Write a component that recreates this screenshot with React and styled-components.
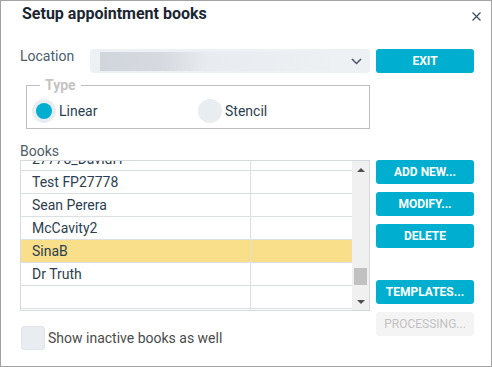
import React, { useLayoutEffect, useRef } from 'react';
import styled, { createGlobalStyle } from 'styled-components';

const GlobalStyle = createGlobalStyle`
  html, body {
    margin: 0;
    padding: 0;
    background: #fff;
  }
  body {
    font-family: Roboto, "Liberation Sans", sans-serif;
  }
  * {
    box-sizing: border-box;
  }
`;

const Dialog = styled.div`
  width: 492px;
  height: 367px;
  border: 1px solid #a3a3a3;
  background: #fff;
  display: flex;
  flex-direction: column;
`;

const Header = styled.div`
  height: 48px;
  display: flex;
  justify-content: space-between;
  align-items: flex-start;
  padding: 3px 10px 0 21px;
`;

const Title = styled.h1`
  margin: 0;
  font-size: 16px;
  line-height: 19px;
  font-weight: 700;
  color: #1b2633;
`;

const CloseButton = styled.button`
  margin-top: 8px;
  padding: 0;
  border: 0;
  background: none;
  width: 9px;
  height: 9px;
  display: flex;
  cursor: pointer;
`;

const Body = styled.div`
  padding: 0 17px 0 19px;
  display: grid;
  grid-template-columns: 350px 98px;
  column-gap: 6px;
  grid-template-areas:
    "loc exit"
    "type ."
    "books ."
    "table btns"
    "check btns";
  align-items: start;
`;

const LocationRow = styled.div`
  grid-area: loc;
  display: flex;
  align-items: flex-start;
`;

const FieldLabel = styled.label`
  font-size: 14px;
  line-height: 16px;
  color: #4d5c6b;
  width: ${p => p.$width || 'auto'};
  margin-top: ${p => p.$top || 0}px;
  display: block;
`;

const Select = styled.div`
  flex: 1;
  height: 24px;
  border-radius: 4px;
  background: #eef1f4;
  display: flex;
  align-items: center;
  justify-content: space-between;
  padding: 0 8px 0 10px;
`;

const Placeholder = styled.span`
  width: 240px;
  height: 19px;
  background: linear-gradient(to right, #d1d5dc 0%, #d6dae0 25%, #e8ebef 45%, #eef1f4 100%);
`;

const ActionButton = styled.button`
  height: 24px;
  width: 98px;
  border: 0;
  border-radius: 3px;
  padding: 0;
  font-family: inherit;
  font-size: 12px;
  font-weight: ${p => (p.disabled ? 400 : 700)};
  color: ${p => (p.disabled ? '#c2c2c2' : '#fff')};
  background: ${p => (p.disabled ? '#f4f4f4' : '#00aed0')};
  margin-top: ${p => p.$gapTop || 0}px;
  text-transform: uppercase;
`;

const ExitButton = styled(ActionButton)`
  grid-area: exit;
`;

const TypeBox = styled.fieldset`
  grid-area: type;
  margin: 4px 0 0 6px;
  border: 1px solid #bdbdbd;
  padding: 0 5px 5px;
  min-width: 0;
`;

const Legend = styled.legend`
  margin-left: 8px;
  padding: 0 5px;
  font-size: 14px;
  line-height: 16px;
  font-weight: 700;
  color: #c4c4c4;
`;

const RadioGroup = styled.div`
  display: grid;
  grid-template-columns: 1fr 1fr;
  margin-top: 6px;
`;

const RadioOption = styled.label`
  display: flex;
  align-items: center;
  gap: 3px;
  font-size: 14px;
  color: #2c3e50;
`;

const RadioRing = styled.span`
  width: 24px;
  height: 24px;
  border-radius: 50%;
  background: #e8edf1;
  display: flex;
  align-items: center;
  justify-content: center;

  &::after {
    content: '';
    width: 16px;
    height: 16px;
    border-radius: 50%;
    background: ${p => (p.$checked ? '#00aed0' : 'transparent')};
  }
`;

const BooksLabel = styled(FieldLabel)`
  grid-area: books;
  margin: 14px 0 1px;
`;

const Table = styled.div`
  grid-area: table;
  height: 151px;
  border: 1px solid #d6dadf;
  display: flex;
`;

const RowList = styled.div`
  flex: 1;
  overflow: hidden;
`;

const Row = styled.div`
  display: grid;
  grid-template-columns: 230px 1fr;
  height: 23px;
  border-bottom: 1px solid #dde0e3;
  background: ${p => (p.$selected ? '#f9df8a' : '#fff')};
`;

const Cell = styled.div`
  font-size: 14px;
  line-height: 22px;
  color: #2c3e50;
  padding-left: 11px;
  white-space: nowrap;
  border-right: ${p => (p.$divider ? '1px solid #dde0e3' : '0')};
`;

const ScrollBar = styled.div`
  width: 17px;
  background: #f0f0f0;
  display: flex;
  flex-direction: column;
`;

const ScrollArrow = styled.div`
  height: 17px;
  display: flex;
  align-items: center;
  justify-content: center;

  &::after {
    content: '';
    border-left: 4px solid transparent;
    border-right: 4px solid transparent;
    ${p => (p.$down ? 'border-top' : 'border-bottom')}: 4px solid #505050;
  }
`;

const Track = styled.div`
  flex: 1;
`;

const Thumb = styled.div`
  margin: 0 2px;
  height: 17px;
  background: #c1c1c1;
`;

const ButtonStack = styled.div`
  grid-area: btns;
  display: flex;
  flex-direction: column;
  gap: 8px;
`;

const CheckRow = styled.label`
  grid-area: check;
  margin-top: 15px;
  display: flex;
  align-items: center;
  gap: 3px;
  font-size: 14px;
  color: #4b4b4b;
`;

const CheckBox = styled.span`
  width: 24px;
  height: 24px;
  margin-left: 1px;
  border-radius: 3px;
  background: #e9edf2;
  border: 1px solid #dfe4ea;
`;

const books = [
  { name: '27778_DavidH' },
  { name: 'Test FP27778' },
  { name: 'Sean Perera' },
  { name: 'McCavity2' },
  { name: 'SinaB', selected: true },
  { name: 'Dr Truth' },
  { name: '' },
  { name: '' },
];

function BooksTable() {
  const listRef = useRef(null);

  useLayoutEffect(() => {
    if (listRef.current) listRef.current.scrollTop = 13;
  }, []);

  return (
    <Table>
      <RowList ref={listRef}>
        {books.map((b, i) => (
          <Row key={i} $selected={b.selected}>
            <Cell $divider>{b.name}</Cell>
            <Cell />
          </Row>
        ))}
      </RowList>
      <ScrollBar>
        <ScrollArrow />
        <Track>
          <Thumb style={{ marginTop: 90 }} />
        </Track>
        <ScrollArrow $down />
      </ScrollBar>
    </Table>
  );
}

export default function App() {
  return (
    <>
      <GlobalStyle />
      <Dialog>
        <Header>
          <Title>Setup appointment books</Title>
          <CloseButton aria-label="Close">
            <svg width="9" height="9" viewBox="0 0 9 9">
              <path d="M0.5 0.5 L8.5 8.5 M8.5 0.5 L0.5 8.5" stroke="#34495e" strokeWidth="1.1" />
            </svg>
          </CloseButton>
        </Header>
        <Body>
          <LocationRow>
            <FieldLabel $width="70px" $top={-1}>Location</FieldLabel>
            <Select>
              <Placeholder />
              <svg width="11" height="7" viewBox="0 0 11 7">
                <path d="M1 1 L5.5 5.5 L10 1" fill="none" stroke="#4a5568" strokeWidth="1.5" />
              </svg>
            </Select>
          </LocationRow>
          <ExitButton>Exit</ExitButton>

          <TypeBox>
            <Legend>Type</Legend>
            <RadioGroup>
              <RadioOption>
                <RadioRing $checked />
                Linear
              </RadioOption>
              <RadioOption>
                <RadioRing />
                Stencil
              </RadioOption>
            </RadioGroup>
          </TypeBox>

          <BooksLabel>Books</BooksLabel>
          <BooksTable />

          <ButtonStack>
            <ActionButton>Add new...</ActionButton>
            <ActionButton>Modify...</ActionButton>
            <ActionButton>Delete</ActionButton>
            <ActionButton $gapTop={24}>Templates...</ActionButton>
            <ActionButton disabled>Processing...</ActionButton>
          </ButtonStack>

          <CheckRow>
            <CheckBox />
            Show inactive books as well
          </CheckRow>
        </Body>
      </Dialog>
    </>
  );
}
